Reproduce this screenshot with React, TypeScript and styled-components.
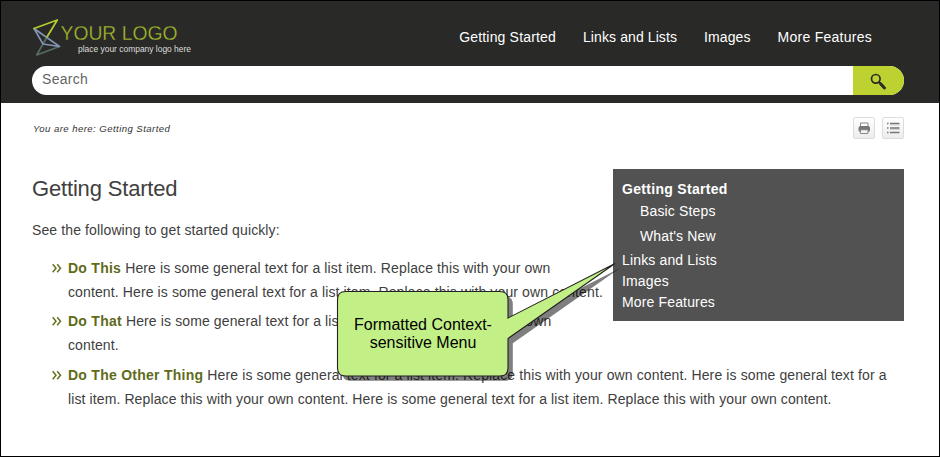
import React from "react";
import styled, { createGlobalStyle } from "styled-components";

const Global = createGlobalStyle`
  * { box-sizing: border-box; }
  html, body { margin: 0; padding: 0; background: #fff; }
  ul, h1, p { margin: 0; padding: 0; list-style: none; }
  a { color: inherit; text-decoration: none; }
`;

const Page = styled.div`
  position: relative;
  width: 940px;
  height: 457px;
  overflow: hidden;
  border: 1px solid #000;
  background: #fff;
  color: #404040;
  font: 14px "Liberation Sans", Arial, sans-serif;
  white-space: nowrap;
`;

const Header = styled.header`
  height: 102px;
  padding: 0 35px 0 31px;
  background: #292928;
`;

const TopRow = styled.div`
  display: flex;
  justify-content: space-between;
  height: 65px;
`;

const Logo = styled.svg`
  display: block;
  width: 170px;
  height: 65px;
`;

const Nav = styled.nav`
  display: flex;
  gap: 27px;
  padding: 27px 32px 0 0;
  line-height: 18px;
  color: #fff;
`;

const NavLink = styled.a<{ $track: number }>`
  letter-spacing: ${(p) => p.$track}px;
`;

const SearchBar = styled.form`
  display: flex;
  height: 29px;
  width: 872px;
  border-radius: 15px;
  overflow: hidden;
  background: #fff;
`;

const SearchInput = styled.div`
  flex: 1;
  padding-left: 10px;
  line-height: 27px;
  letter-spacing: 0.3px;
  color: #656565;
`;

const SearchButton = styled.button`
  width: 51px;
  border: 0;
  padding: 0;
  background: #bdd230;
  svg { display: block; margin: 1px 0 0 17px; }
`;

const Toolbar = styled.div`
  display: flex;
  justify-content: space-between;
  padding: 14px 35px 0 31px;
  height: 66px;
`;

const Crumbs = styled.div`
  padding-left: 1px;
  font-size: 9.6px;
  font-style: italic;
  line-height: 23px;
  letter-spacing: 0.43px;
  color: #333;
`;

const Tools = styled.div`
  display: flex;
  gap: 7px;
`;

const Tool = styled.button`
  width: 22px;
  height: 22px;
  padding: 0;
  border: 1px solid #dcdcdc;
  border-radius: 2px;
  background: linear-gradient(#fff, #ededed);
  svg { display: block; }
`;

const Content = styled.main`
  display: flex;
  justify-content: space-between;
  align-items: flex-start;
  padding: 0 35px 0 31px;
`;

const Article = styled.article`
  width: 581px;
`;

const Title = styled.h1`
  padding-top: 7px;
  font-size: 22px;
  line-height: 26px;
  font-weight: 400;
  letter-spacing: -0.17px;
`;

const Intro = styled.p`
  padding: 16px 0 14px;
  line-height: 24px;
  letter-spacing: 0.12px;
`;

const List = styled.ul`
  display: grid;
`;

const Item = styled.li<{ $gap?: number }>`
  display: grid;
  grid-template-columns: 16px auto;
  padding-left: 20px;
  margin-top: ${(p) => p.$gap ?? 0}px;
  line-height: 24px;
`;

const Bullet = styled.svg`
  width: 10px;
  height: 24px;
`;

const Line = styled.div<{ $track?: number }>`
  height: 24px;
  letter-spacing: ${(p) => p.$track ?? 0.12}px;
`;

const Term = styled.b`
  color: #5f6b1a;
  letter-spacing: 0.26px;
`;

const Menu = styled.ul`
  width: 291px;
  height: 152px;
  padding: 10px 9px 0;
  background: #525252;
  color: #fff;
`;

const MenuItem = styled.li<{ $height?: number; $nested?: boolean; $active?: boolean }>`
  height: ${(p) => p.$height ?? 21}px;
  line-height: 21px;
  padding-left: ${(p) => (p.$nested ? 18 : 0)}px;
  font-weight: ${(p) => (p.$active ? 700 : 400)};
  letter-spacing: ${(p) => (p.$active ? 0.3 : 0.15)}px;
`;

const Callout = styled.div`
  position: absolute;
  left: 335px;
  top: 259px;
  width: 290px;
  height: 126px;
`;

const CalloutShape = styled.svg`
  display: block;
`;

const CalloutText = styled.div`
  position: absolute;
  left: 1px;
  top: 56px;
  width: 172px;
  text-align: center;
  color: #000;
  font-size: 16px;
  line-height: 18px;
`;

const Chevrons = () => (
  <Bullet viewBox="0 0 10 24" fill="none" stroke="#65701c" strokeWidth="1.5">
    <path d="M.7 8.3 4 12.3.7 16.3M5.2 8.3l3.3 4-3.3 4" />
  </Bullet>
);

export default function App() {
  return (
    <Page>
      <Global />
      <Header>
        <TopRow>
          <Logo viewBox="32 1 170 65" fontFamily="Liberation Sans, Arial, sans-serif">
            <g fill="none" strokeLinecap="round" strokeLinejoin="round" strokeWidth="1.6">
              <path d="M47.3 36.5 36.7 55 59.5 46.5" stroke="#566d66" />
              <path d="M34 28.5 43 44 59.5 46.5z" stroke="#8094b4" />
              <path d="M34 28.5 57.3 20 47.3 36.5" stroke="#b5cc2c" strokeWidth="1.8" />
            </g>
            <text x="60.5" y="40" fontSize="19.5" fill="#a5b92c" stroke="#292928" strokeWidth=".3" textLength="117" lengthAdjust="spacingAndGlyphs">YOUR LOGO</text>
            <text x="78" y="52" fontSize="8.3" fill="#dedede" textLength="113" lengthAdjust="spacingAndGlyphs">place your company logo here</text>
          </Logo>
          <Nav>
            <NavLink $track={0.17}>Getting Started</NavLink>
            <NavLink $track={0.1}>Links and Lists</NavLink>
            <NavLink $track={0.1}>Images</NavLink>
            <NavLink $track={0.26}>More Features</NavLink>
          </Nav>
        </TopRow>
        <SearchBar>
          <SearchInput>Search</SearchInput>
          <SearchButton type="button" aria-label="Search">
            <svg width="18" height="23" viewBox="0 0 18 23" fill="none" stroke="#292928">
              <circle cx="5.8" cy="8.8" r="4.3" strokeWidth="1.7" />
              <path d="m8.9 12 2 2" strokeWidth="2" />
              <path d="m10.6 13.8 3.9 4.2" strokeWidth="3" strokeLinecap="round" />
            </svg>
          </SearchButton>
        </SearchBar>
      </Header>
      <Toolbar>
        <Crumbs>You are here: Getting Started</Crumbs>
        <Tools>
          <Tool aria-label="Print">
            <svg width="20" height="20" viewBox="0 0 20 20">
              <path d="M6.5 9V5h7.500V9" fill="#fff" stroke="#8a8a8a" />
              <rect x="4.500" y="8" width="11.500" height="6" rx="2" fill="#777" />
              <path d="M6.500 11.800h7.500v3.700H6.500z" fill="#f6f6f6" stroke="#888" />
            </svg>
          </Tool>
          <Tool aria-label="Contents">
            <svg width="20" height="20" viewBox="0 0 20 20" fill="none" stroke="#777">
              <path d="M4 5.500h1.500M4 10h1.500M4 14.500h1.500M7 5.500h9.500M7 10h9.500M7 14.500h9.500" strokeWidth="1.5" />
              <path d="M7 7h9.500M7 11.500h9.500" stroke="#c5c5c5" strokeWidth=".8" />
            </svg>
          </Tool>
        </Tools>
      </Toolbar>
      <Content>
        <Article>
          <Title>Getting Started</Title>
          <Intro>See the following to get started quickly:</Intro>
          <List>
            <Item>
              <Chevrons />
              <div>
                <Line><Term>Do This</Term> Here is some general text for a list item. Replace this with your own</Line>
                <Line>content. Here is some general text for a list item. Replace this with your own content.</Line>
              </div>
            </Item>
            <Item $gap={5}>
              <Chevrons />
              <div>
                <Line><Term>Do That</Term> Here is some general text for a list item. Replace this with your own</Line>
                <Line>content.</Line>
              </div>
            </Item>
            <Item $gap={6}>
              <Chevrons />
              <div>
                <Line><Term>Do The Other Thing</Term> Here is some general text for a list item. Replace this with your own content. Here is some general text for a</Line>
                <Line $track={0.107}>list item. Replace this with your own content. Here is some general text for a list item. Replace this with your own content.</Line>
              </div>
            </Item>
          </List>
        </Article>
        <Menu>
          <MenuItem $active $height={22}>Getting Started</MenuItem>
          <MenuItem $nested $height={25}>Basic Steps</MenuItem>
          <MenuItem $nested $height={24}>What's New</MenuItem>
          <MenuItem>Links and Lists</MenuItem>
          <MenuItem>Images</MenuItem>
          <MenuItem>More Features</MenuItem>
        </Menu>
      </Content>
      <Callout>
        <CalloutShape width="290" height="126" viewBox="336 260 290 126">
          <path transform="translate(4.8 4.8)" fill="#000" fillOpacity=".5" d="M345.5 291.5H500q8 0 8 8V318L615 263.5 508 338.5V368q0 8-8 8H345.5q-8 0-8-8V299.5q0-8 8-8z" />
          <path fill="#c3ef87" stroke="#222" strokeWidth="1.1" d="M345.5 291.5H500q8 0 8 8V318L615 263.5 508 338.5V368q0 8-8 8H345.5q-8 0-8-8V299.5q0-8 8-8z" />
        </CalloutShape>
        <CalloutText>Formatted Context-<br />sensitive Menu</CalloutText>
      </Callout>
    </Page>
  );
}
